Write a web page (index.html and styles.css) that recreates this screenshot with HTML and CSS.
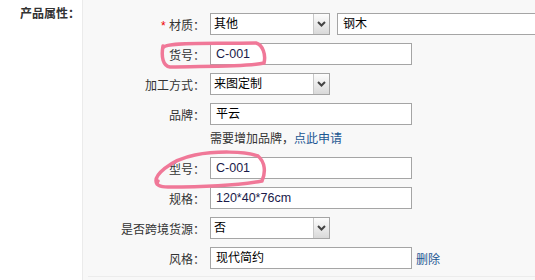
FILE: index.html
```html
<!DOCTYPE html>
<html lang="zh-CN">

<head>
    <meta charset="UTF-8">
    <title>产品属性</title>
    <link rel="stylesheet" href="styles.css">
</head>

<body>
    <div class="page">
        <div class="side">产品属性：</div>
        <div class="panel">
            <div class="row">
                <label class="label"><span class="req">*</span> 材质：</label>
                <div class="select"><span class="val">其他</span><span class="arrow"><svg width="9" height="6" viewBox="0 0 9 6"><path d="M1 1 L4.5 4.5 L8 1" fill="none" stroke="#444" stroke-width="2"/></svg></span></div>
                <div class="input wide">钢木</div>
            </div>
            <div class="row">
                <label class="label">货号：</label>
                <div class="input num">C-001</div>
            </div>
            <div class="row">
                <label class="label">加工方式：</label>
                <div class="select"><span class="val">来图定制</span><span class="arrow"><svg width="9" height="6" viewBox="0 0 9 6"><path d="M1 1 L4.5 4.5 L8 1" fill="none" stroke="#444" stroke-width="2"/></svg></span></div>
            </div>
            <div class="row">
                <label class="label">品牌：</label>
                <div class="input">平云</div>
            </div>
            <div class="row tip">
                <span class="label"></span>
                <span>需要增加品牌，<a href="#" class="link">点此申请</a></span>
            </div>
            <div class="row">
                <label class="label">型号：</label>
                <div class="input num">C-001</div>
            </div>
            <div class="row">
                <label class="label">规格：</label>
                <div class="input num">120*40*76cm</div>
            </div>
            <div class="row">
                <label class="label">是否跨境货源：</label>
                <div class="select"><span class="val">否</span><span class="arrow"><svg width="9" height="6" viewBox="0 0 9 6"><path d="M1 1 L4.5 4.5 L8 1" fill="none" stroke="#444" stroke-width="2"/></svg></span></div>
            </div>
            <div class="row">
                <label class="label">风格：</label>
                <div class="input">现代简约</div>
                <a href="#" class="link del">删除</a>
            </div>
            <div class="foot"></div>
        </div>
    </div>
    <!-- hand drawn marks -->
    <svg class="marks" width="535" height="280" viewBox="0 0 535 280">
        <path d="M163,48 C165,42 205,44 256,43 C263,45 266,55 264,63 C248,67 200,66 170,67 C163,66 161,57 163,46" />
        <path d="M157,184 C152,176 170,160 195,155 C215,151 245,151 258,156 C265,162 266,172 262,181 C240,185 200,187 168,187 C160,187 155,185 158,181" />
    </svg>
</body>

</html>
```

FILE: styles.css
```css
* {
    box-sizing: border-box;
}

body {
    margin: 0;
    background: #fff;
    font-family: "Liberation Sans", "Noto Sans CJK SC", sans-serif;
    font-size: 12px;
    color: #333;
}

.page {
    display: flex;
    height: 280px;
    overflow: hidden;
}

.side {
    flex: 0 0 82px;
    padding: 4px 0 0 20px;
    font-weight: bold;
    font-size: 12px;
    white-space: nowrap;
    color: #333;
}

.panel {
    flex: 1;
    min-width: 0;
    overflow: hidden;
    background: #f8f8f8;
    border-left: 1px solid #ebebeb;
    padding-top: 13px;
}

.row {
    display: flex;
    align-items: center;
    height: 22px;
    margin-bottom: 8px;
}

.label {
    flex: 0 0 122px;
    margin-right: 5px;
    text-align: right;
    white-space: nowrap;
}

.req {
    color: #e00;
}

.input {
    flex: 0 0 202px;
    height: 22px;
    line-height: 20px;
    border: 1px solid #a5a5a5;
    background: #fff;
    padding-left: 5px;
    color: #000;
}

.input.wide {
    flex: 0 0 220px;
    margin-left: 7px;
}

.input.num {
    color: #1a1a4a;
    font-size: 12.5px;
}

.select {
    display: flex;
    flex: 0 0 120px;
    height: 22px;
    border: 1px solid #a5a5a5;
    background: #fff;
    color: #000;
}

.select .val {
    flex: 1;
    line-height: 20px;
    padding-left: 3px;
}

.select .arrow {
    width: 16px;
    display: flex;
    align-items: center;
    justify-content: center;
    border-left: 1px solid #c8c8c8;
    background: linear-gradient(#fdfdfd, #d9d9d9);
}

.tip {
    height: 16px;
    line-height: 13px;
    align-items: flex-start;
}

.link {
    color: #1b5692;
    text-decoration: none;
}

.del {
    margin-left: 4px;
}

.foot {
    margin: -1px 0 0 5px;
    border-top: 1px solid #ececec;
}

.marks {
    position: absolute;
    top: 0;
    left: 0;
    pointer-events: none;
}

.marks path {
    fill: none;
    stroke: #f07898;
    stroke-width: 3.5;
    stroke-linecap: round;
}
```
